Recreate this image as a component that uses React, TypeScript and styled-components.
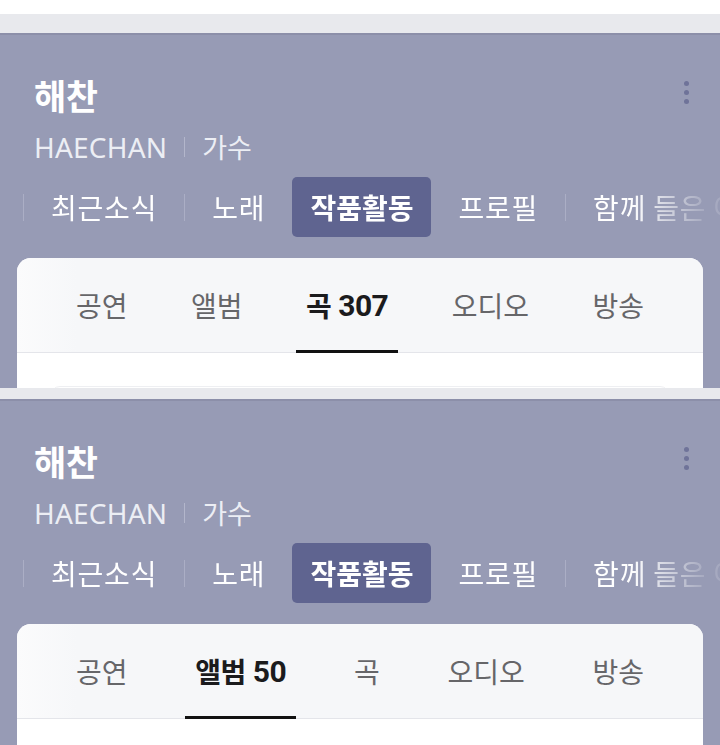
import styled, { createGlobalStyle } from 'styled-components'

const Global = createGlobalStyle`
  html, body {
    margin: 0;
    padding: 0;
    background: #ffffff;
    overflow: hidden;
  }
  body {
    font-family: "Noto Sans CJK KR", "Noto Sans", "Liberation Sans", sans-serif;
    -webkit-font-smoothing: antialiased;
  }
`

const Page = styled.div`
  width: 720px;
  height: 745px;
  display: flex;
  flex-direction: column;
  overflow: hidden;
`

const Shot = styled.section<{ $height: number }>`
  height: ${({ $height }) => $height}px;
  flex-shrink: 0;
  display: flex;
  flex-direction: column;
  overflow: hidden;
`

const StatusGap = styled.div<{ $height: number }>`
  height: ${({ $height }) => $height}px;
  background: #ffffff;
  flex-shrink: 0;
`

const NavStrip = styled.div<{ $height: number }>`
  height: ${({ $height }) => $height}px;
  background: #e8e9ed;
  border-bottom: 2px solid #8c8fa9;
  flex-shrink: 0;
`

const Panel = styled.div`
  flex: 1;
  background: #979bb5;
  display: flex;
  flex-direction: column;
  overflow: hidden;
`

const Header = styled.div`
  position: relative;
  padding: 39px 34px 0;
`

const Name = styled.h1`
  margin: 0;
  font-size: 35px;
  line-height: 42px;
  font-weight: 700;
  color: #ffffff;
  letter-spacing: -0.5px;
`

const Kebab = styled.button`
  position: absolute;
  top: 40px;
  right: 26px;
  width: 16px;
  height: 34px;
  padding: 0;
  border: 0;
  background: none;
  display: flex;
  flex-direction: column;
  align-items: center;
  justify-content: center;
  gap: 4px;

  span {
    width: 5px;
    height: 5px;
    border-radius: 50%;
    background: #6f7399;
  }
`

const Meta = styled.div`
  margin-top: 15px;
  display: flex;
  align-items: center;
  gap: 17px;
  font-size: 27px;
  line-height: 32px;
  color: #eceef4;
`

const Latin = styled.span`
  font-family: "Noto Sans", "Liberation Sans", sans-serif;
  font-size: 28px;
  letter-spacing: 0.2px;
`

const MetaDivider = styled.i`
  width: 1px;
  height: 20px;
  background: #b3b6cb;
`

const MenuRow = styled.nav`
  margin-top: 14px;
  padding-left: 23px;
  display: flex;
  align-items: center;
  gap: 9px;
  white-space: nowrap;
  overflow: hidden;
  -webkit-mask-image: linear-gradient(90deg, #000 0, #000 630px, rgba(0, 0, 0, 0.15) 705px);
  mask-image: linear-gradient(90deg, #000 0, #000 630px, rgba(0, 0, 0, 0.15) 705px);
`

const MenuItem = styled.a<{ $active?: boolean }>`
  flex-shrink: 0;
  height: 60px;
  padding: 0 18px;
  display: flex;
  align-items: center;
  border-radius: 5px;
  font-size: 28px;
  letter-spacing: ${({ $active }) => ($active ? '0' : '0.8px')};
  font-weight: ${({ $active }) => ($active ? 700 : 400)};
  color: #ffffff;
  background: ${({ $active }) => ($active ? '#5f6490' : 'transparent')};
`

const MenuDivider = styled.i`
  flex-shrink: 0;
  width: 1px;
  height: 27px;
  background: #abaec5;
`

const Card = styled.div`
  margin: 21px 17px 0;
  background: #ffffff;
  border-radius: 14px 14px 0 0;
  overflow: hidden;
  flex: 1;
`

const SubTabs = styled.div`
  height: 94px;
  padding: 0 49px;
  display: flex;
  justify-content: space-between;
  background: linear-gradient(90deg, #fbfbfc 0, #f6f7f9 60px, #f6f7f9 100%);
  border-bottom: 1px solid #e4e5ea;
`

const SubTab = styled.a<{ $active?: boolean }>`
  position: relative;
  padding: 0 10px;
  display: flex;
  align-items: center;
  font-size: 28px;
  font-weight: ${({ $active }) => ($active ? 700 : 400)};
  color: ${({ $active }) => ($active ? '#1b1b1d' : '#666669')};
  letter-spacing: ${({ $active }) => ($active ? '-0.5px' : '0')};

  &::after {
    content: '';
    display: ${({ $active }) => ($active ? 'block' : 'none')};
    position: absolute;
    left: 0;
    right: 0;
    bottom: -1px;
    height: 3px;
    background: #111111;
  }
`

const Count = styled.span`
  margin-left: 7px;
  font-family: "Roboto", "Liberation Sans", sans-serif;
  font-size: 30px;
`

const ListBox = styled.div`
  margin: 33px 33px 0;
  height: 40px;
  border: 1px solid #eeeff2;
  border-radius: 10px;
`

const menus = ['최근소식', '노래', '작품활동', '프로필', '함께 들은 아티스트']
const subs = [
  { label: '공연' },
  { label: '앨범', count: 50 },
  { label: '곡', count: 307 },
  { label: '오디오' },
  { label: '방송' },
]

function Screen({ activeSub, height, statusGap, navStrip }: {
  activeSub: string
  height: number
  statusGap: number
  navStrip: number
}) {
  const activeMenu = '작품활동'
  return (
    <Shot $height={height}>
      {statusGap > 0 && <StatusGap $height={statusGap} />}
      <NavStrip $height={navStrip} />
      <Panel>
        <Header>
          <Name>해찬</Name>
          <Kebab aria-label="더보기">
            <span />
            <span />
            <span />
          </Kebab>
          <Meta>
            <Latin>HAECHAN</Latin>
            <MetaDivider />
            가수
          </Meta>
        </Header>
        <MenuRow>
          <MenuDivider />
          {menus.map((m, i) => {
            const prev = menus[i - 1]
            const showDivider = i > 0 && m !== activeMenu && prev !== activeMenu
            return (
              <span key={m} style={{ display: 'contents' }}>
                {showDivider && <MenuDivider />}
                <MenuItem $active={m === activeMenu}>{m}</MenuItem>
              </span>
            )
          })}
        </MenuRow>
        <Card>
          <SubTabs>
            {subs.map(s => (
              <SubTab key={s.label} $active={s.label === activeSub}>
                {s.label}
                {s.label === activeSub && s.count && <Count>{s.count}</Count>}
              </SubTab>
            ))}
          </SubTabs>
          <ListBox />
        </Card>
      </Panel>
    </Shot>
  )
}

export default function App() {
  return (
    <>
      <Global />
      <Page>
        <Screen activeSub="곡" height={388} statusGap={14} navStrip={19} />
        <Screen activeSub="앨범" height={357} statusGap={0} navStrip={11} />
      </Page>
    </>
  )
}
